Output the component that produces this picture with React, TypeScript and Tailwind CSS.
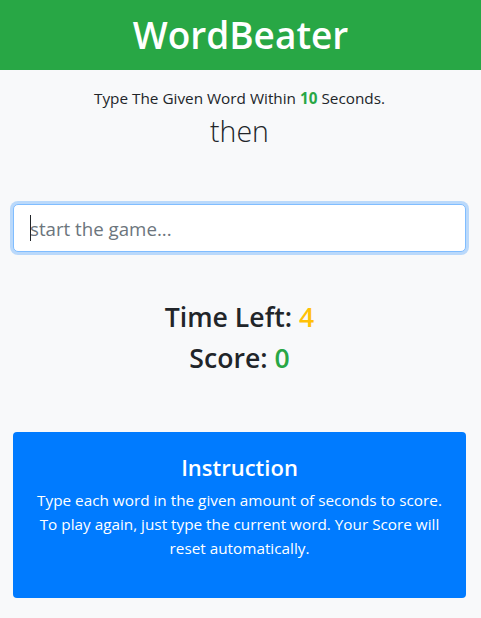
export default function App() {
  return (
    <div className="min-h-screen bg-[#f8f9fa] text-[#212529] font-['Open_Sans',sans-serif]">
      {/* Header */}
      <header className="bg-[#28a745] py-[11px] text-center">
        <h1 className="text-[37px] font-semibold leading-[48px] text-white">WordBeater</h1>
      </header>

      <main className="pl-[13px] pr-[15px]">
        <div className="mt-[16px] text-center">
          <p className="text-[15.3px] leading-6">
            Type The Given Word Within <span className="font-bold text-[#28a745]">10</span> Seconds.
          </p>
          <h2 className="mt-[3px] text-[28.5px] font-light leading-[36px]">then</h2>
        </div>

        {/* Input */}
        <div className="relative mt-[55px]">
          <input
            type="text"
            placeholder="start the game..."
            className="h-12 w-full rounded-[5px] border border-[#80bdff] bg-white px-4 text-[18.7px] text-[#495057] placeholder-[#6c757d] shadow-[0_0_0_3px_rgba(0,123,255,0.25)] outline-none"
          />
          <span className="absolute left-[17px] top-[11px] h-[26px] w-px bg-[#212529]" />
        </div>

        {/* Stats */}
        <div className="mt-[48px] text-center">
          <h3 className="text-[26.6px] font-semibold leading-[34px]">
            Time Left: <span className="text-[#ffc107]">4</span>
          </h3>
          <h3 className="mt-[7px] text-[26.6px] font-semibold leading-[34px]">
            Score: <span className="text-[#28a745]">0</span>
          </h3>
        </div>

        {/* Instruction card */}
        <div className="mt-[57px] rounded-[4px] bg-[#007bff] px-5 pb-[22px] pt-5 text-center text-white">
          <h4 className="mb-[6px] text-[22px] font-semibold leading-[30px]">Instruction</h4>
          <p className="mb-4 text-[15.3px] leading-6">
            Type each word in the given amount of seconds to score. To play again, just type the current
            word. Your Score will reset automatically.
          </p>
        </div>
      </main>
    </div>
  )
}
